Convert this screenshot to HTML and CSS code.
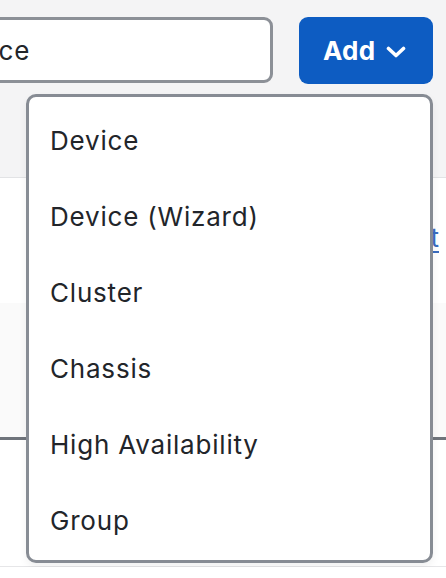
FILE: index.html
```html
<!DOCTYPE html>
<html lang="en">
  <head>
    <meta charset="UTF-8" />
    <meta name="viewport" content="width=device-width, initial-scale=1.0" />
    <title>Devices</title>
    <link rel="stylesheet" href="styles.css">
  </head>
  <body>
    <div class="toolbar">
      <input class="search" type="text" value="Device" />
      <div class="add-wrap">
        <button class="add-btn" type="button">
          Add
          <svg class="chevron" width="20" height="12" viewBox="0 0 20 12">
            <path d="M2.5 2.5 L10 9.5 L17.5 2.5" fill="none" stroke="#fff" stroke-width="3.6" stroke-linecap="round" stroke-linejoin="round" />
          </svg>
        </button>
        <ul class="menu">
          <li>Device</li>
          <li>Device (Wizard)</li>
          <li>Cluster</li>
          <li>Chassis</li>
          <li>High Availability</li>
          <li>Group</li>
        </ul>
      </div>
    </div>
    <div class="row row-first">
      <a class="row-link" href="#">Edit</a>
    </div>
    <div class="row row-shaded"></div>
    <div class="row row-last"></div>
  </body>
</html>
```

FILE: styles.css
```css
body {
  margin: 0;
  background-color: #fff;
  font-family: Inter, "Noto Sans", sans-serif;
  color: #22252a;
  overflow: hidden;
}
.toolbar {
  display: flex;
  align-items: flex-start;
  gap: 26px;
  height: 160px;
  padding-top: 17px;
  background-color: #f4f4f5;
  border-bottom: 1px solid #e2e3e5;
}
.search {
  box-sizing: border-box;
  width: 353px;
  height: 66px;
  margin-left: -80px;
  padding: 0 18px;
  border: 3px solid #8c9097;
  border-radius: 9px;
  background-color: #fff;
  font-family: Inter, sans-serif;
  font-size: 26px;
  letter-spacing: 0.8px;
  color: #22252a;
}
.add-wrap {
  position: relative;
}
.add-btn {
  display: flex;
  align-items: center;
  gap: 10px;
  box-sizing: border-box;
  width: 134px;
  height: 67px;
  padding: 0 0 0 24px;
  border: none;
  border-radius: 9px;
  background-color: #0d5cc2;
  color: #fff;
  font-family: Inter, sans-serif;
  font-weight: 700;
  font-size: 26px;
  letter-spacing: 0.3px;
}
.chevron {
  margin-top: 2px;
}
.menu {
  position: absolute;
  top: 77px;
  right: 0;
  width: 401px;
  margin: 0;
  padding: 6px 0 1px;
  list-style: none;
  background-color: #fff;
  border: 3px solid #878c94;
  border-radius: 10px;
  box-shadow: 0 4px 8px rgba(0, 0, 0, 0.06);
  z-index: 2;
}
.menu li {
  height: 76px;
  line-height: 76px;
  padding-left: 21px;
  font-size: 26px;
  letter-spacing: 0.8px;
  color: #22252a;
}
.row {
  display: flex;
  justify-content: flex-end;
}
.row-first {
  height: 125px;
  background-color: #fff;
}
.row-link {
  margin-top: 44px;
  margin-right: 7px;
  font-size: 26px;
  color: #3a6cbf;
  text-decoration: underline;
  text-underline-offset: 4px;
}
.row-shaded {
  height: 134px;
  background-color: #fafafa;
  border-bottom: 3px solid #6f747b;
}
.row-last {
  height: 126px;
  border-bottom: 1px solid #e6e6e8;
}
```
